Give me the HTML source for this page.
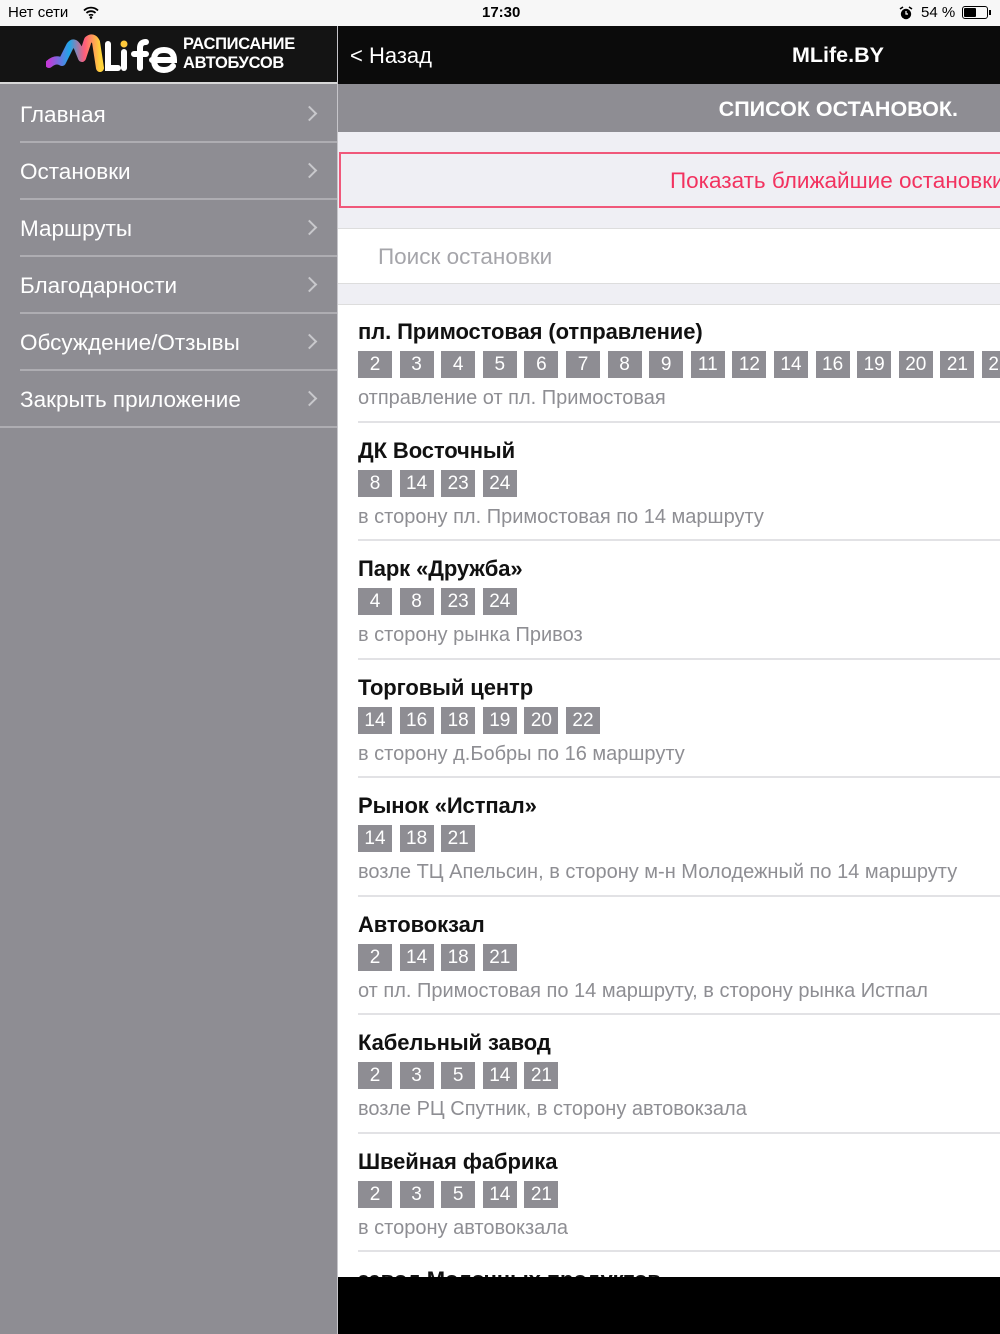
<!DOCTYPE html>
<html><head><meta charset="utf-8"><style>
*{margin:0;padding:0;box-sizing:border-box}
body{width:1000px;height:1334px;position:relative;overflow:hidden;background:#efeff4;font-family:"Liberation Sans","Noto Sans CJK SC",sans-serif}
.a{position:absolute}
.status{left:0;top:0;width:1000px;height:26px;background:#f7f7f7;font-size:15px;color:#000}
.side{left:0;top:26px;width:338px;height:1308px;background:#8e8d93;border-right:1px solid #c6c5ca}
.logo{left:0;top:0;width:337px;height:58px;background:#141414;border-bottom:2px solid #d8d8d8}
.mi{position:absolute;left:0;width:337px;height:57px;color:#fff;font-size:22.5px;line-height:57px;padding-left:20px}
.mi .sep{position:absolute;left:20px;right:0;bottom:0;height:2px;background:#aeadb2}
.chev{position:absolute;right:22px;top:22px;width:11px;height:11px;border-right:2.5px solid #c8c8cc;border-top:2.5px solid #c8c8cc;transform:rotate(45deg)}
.nav{left:338px;top:26px;width:662px;height:58px;background:#0b0b0b;color:#fff}
.hdr{left:338px;top:84px;width:662px;height:48px;background:#8e8d93;color:#fff;font-weight:bold;font-size:21.5px;line-height:50px;text-align:right;padding-right:42px}
.btn{left:339px;top:152px;width:680px;height:56px;border:2px solid #f0587a;color:#f2325f;font-size:22.5px;line-height:54px;padding-left:329px;white-space:nowrap;overflow:hidden}
.search{left:338px;top:228px;width:662px;height:56px;background:#fff;border-top:1px solid #ddd;border-bottom:1px solid #ddd;color:#a5a5aa;font-size:22.5px;line-height:56px;padding-left:40px}
.list{left:338px;top:304px;width:662px;height:973px;background:#fff;overflow:hidden;border-top:1px solid #ddd}
.it{position:absolute;left:0;width:662px;height:118.5px}
.it .t{position:absolute;left:20px;top:15px;font-size:22px;font-weight:bold;color:#111;white-space:nowrap;letter-spacing:-0.1px}
.it .b{position:absolute;top:47px;width:34px;height:27px;background:#8e8d93;color:#fff;font-size:19px;line-height:28px;text-align:center}
.it .s{position:absolute;left:20px;top:83px;font-size:20px;color:#8e8e93;white-space:nowrap}
.it .l{position:absolute;left:20px;right:0;bottom:0;height:2px;background:#e2e2e5}
.foot{left:338px;top:1277px;width:662px;height:57px;background:#000}
</style></head><body>
<div class="a status">
 <span class="a" style="left:8px;top:4px">Нет сети</span>
 <svg class="a" style="left:83px;top:6px" width="16" height="13" viewBox="0 0 16 13"><path d="M1 4.5a10 10 0 0 1 14 0M3.5 7a6.5 6.5 0 0 1 9 0M6 9.5a3 3 0 0 1 4 0" stroke="#000" stroke-width="1.8" fill="none"/><circle cx="8" cy="11.5" r="1.3"/></svg>
 <span class="a" style="left:482px;top:4px;font-weight:bold">17:30</span>
 <svg class="a" style="left:899px;top:6px" width="14" height="14" viewBox="0 0 14 14"><circle cx="7" cy="8" r="5.2" fill="#000"/><path d="M1 3l3-2M13 3l-3-2" stroke="#000" stroke-width="1.6"/><path d="M7 5v3h2" stroke="#fff" stroke-width="1.2" fill="none"/></svg>
 <span class="a" style="left:921px;top:4px">54 %</span>
 <div class="a" style="left:962px;top:6px;width:26px;height:13px;border:1px solid #000;border-radius:3px;padding:1px"><div style="width:12px;height:9px;background:#000;border-radius:1px"></div></div>
 <div class="a" style="left:989px;top:10px;width:2px;height:5px;background:#000"></div>
</div>
<div class="a side">
 <div class="a logo">
  <svg class="a" style="left:46px;top:6px" width="136" height="44" viewBox="0 0 136 44">
   <defs><linearGradient id="g" x1="0" x2="1"><stop offset="0" stop-color="#c03bd6"/><stop offset=".4" stop-color="#1fa6e8"/><stop offset=".7" stop-color="#ff5c7a"/><stop offset="1" stop-color="#ffd33a"/></linearGradient></defs>
   <path d="M3 32 Q10 26 16 30 L24 14 Q28 8 32 16 L36 26 L42 8 Q47 4 50 10 L54 36" stroke="url(#g)" stroke-width="8" fill="none" stroke-linecap="round" stroke-linejoin="round"/>
   <path d="M62 12v24h10" stroke="#fff" stroke-width="6" fill="none" stroke-linecap="round"/>
   <circle cx="78" cy="12" r="3.5" fill="#ffc83a"/>
   <path d="M78 20v16" stroke="#fff" stroke-width="6" stroke-linecap="round"/>
   <path d="M94 36V16q0-6 6-6M88 22h12" stroke="#fff" stroke-width="6" fill="none" stroke-linecap="round"/>
   <path d="M106 28h22q0-10-10-10t-10 10 10 10q6 0 9-4" stroke="#fff" stroke-width="6" fill="none" stroke-linecap="round"/>
  </svg>
  <div class="a" style="left:183px;top:9px;color:#fff;font-weight:bold;font-size:16.5px;line-height:19px;letter-spacing:-0.3px">РАСПИСАНИЕ<br>АВТОБУСОВ</div>
 </div>
 <div class="mi" style="top:60px">Главная<span class="chev"></span><span class="sep"></span></div>
 <div class="mi" style="top:117px">Остановки<span class="chev"></span><span class="sep"></span></div>
 <div class="mi" style="top:174px">Маршруты<span class="chev"></span><span class="sep"></span></div>
 <div class="mi" style="top:231px">Благодарности<span class="chev"></span><span class="sep"></span></div>
 <div class="mi" style="top:288px">Обсуждение/Отзывы<span class="chev"></span><span class="sep"></span></div>
 <div class="mi" style="top:345px">Закрыть приложение<span class="chev"></span><span class="sep" style="left:0"></span></div>
</div>
<div class="a nav">
 <span class="a" style="left:12px;top:17px;font-size:22px">&lt; Назад</span>
 <span class="a" style="left:454px;top:17px;font-size:21.5px;font-weight:bold">MLife.BY</span>
</div>
<div class="a hdr">СПИСОК ОСТАНОВОК.</div>
<div class="a btn">Показать ближайшие остановки</div>
<div class="a search">Поиск остановки</div>
<div class="a list" id="L"></div>
<div class="a foot"></div>
<script>
var d=[["пл. Примостовая (отправление)",[2,3,4,5,6,7,8,9,11,12,14,16,19,20,21,22],"отправление от пл. Примостовая"],
["ДК Восточный",[8,14,23,24],"в сторону пл. Примостовая по 14 маршруту"],
["Парк «Дружба»",[4,8,23,24],"в сторону рынка Привоз"],
["Торговый центр",[14,16,18,19,20,22],"в сторону д.Бобры по 16 маршруту"],
["Рынок «Истпал»",[14,18,21],"возле ТЦ Апельсин, в сторону м-н Молодежный по 14 маршруту"],
["Автовокзал",[2,14,18,21],"от пл. Примостовая по 14 маршруту, в сторону рынка Истпал"],
["Кабельный завод",[2,3,5,14,21],"возле РЦ Спутник, в сторону автовокзала"],
["Швейная фабрика",[2,3,5,14,21],"в сторону автовокзала"],
["завод Молочных продуктов",[],""]];
var h="";d.forEach(function(x,i){h+='<div class="it" style="top:'+(i*118.5-1)+'px"><div class="t">'+x[0]+'</div>';
x[1].forEach(function(n,j){h+='<div class="b" style="left:'+(20+j*41.6).toFixed(1)+'px">'+n+'</div>'});
h+='<div class="s">'+x[2]+'</div>'+(i<8?'<div class="l"></div>':'')+'</div>'});
document.getElementById("L").innerHTML=h;
</script>
</body></html>
